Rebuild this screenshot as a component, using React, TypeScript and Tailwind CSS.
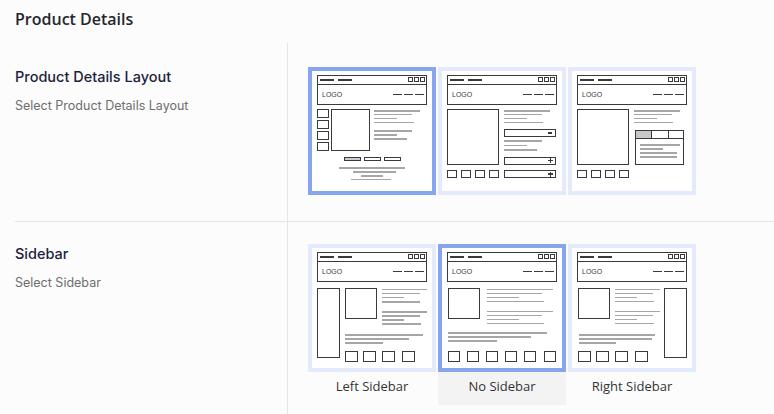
import React from "react";

const DARK = "#3a3a3a";
const GRAY = "#a6a6a6";

type Ln = [number, number, number];

function Lines({ items }: { items: Ln[] }) {
  return (
    <>
      {items.map(([x1, x2, y], i) => (
        <line key={i} x1={x1} x2={x2} y1={y} y2={y} stroke={GRAY} strokeWidth={1.3} />
      ))}
    </>
  );
}

function Box({ x, y, w, h, fill = "none" }: { x: number; y: number; w: number; h: number; fill?: string }) {
  return <rect x={x} y={y} width={w} height={h} fill={fill} stroke={DARK} strokeWidth={1} />;
}

function Header() {
  return (
    <g>
      <Box x={5.5} y={4.5} w={108.5} h={29} />
      <line x1={5.5} x2={114} y1={13.5} y2={13.5} stroke={DARK} strokeWidth={1} />
      <line x1={8} x2={22} y1={9} y2={9} stroke={DARK} strokeWidth={1.2} />
      <line x1={26} x2={40} y1={9} y2={9} stroke={DARK} strokeWidth={1.2} />
      <Box x={96.5} y={6.5} w={4} h={4} />
      <Box x={102.5} y={6.5} w={4} h={4} />
      <Box x={108.5} y={6.5} w={4} h={4} />
      <text x={10} y={26} fontSize={7} fill="#3a3a3a" fontFamily="'Liberation Sans', sans-serif">
        LOGO
      </text>
      <line x1={81} x2={90} y1={23.5} y2={23.5} stroke={DARK} strokeWidth={1.3} />
      <line x1={92} x2={101} y1={23.5} y2={23.5} stroke={DARK} strokeWidth={1.3} />
      <line x1={103} x2={112} y1={23.5} y2={23.5} stroke={DARK} strokeWidth={1.3} />
    </g>
  );
}

function Plus({ x, y }: { x: number; y: number }) {
  return (
    <g stroke={DARK} strokeWidth={1.2}>
      <line x1={x - 2.5} x2={x + 2.5} y1={y} y2={y} />
      <line x1={x} x2={x} y1={y - 2.5} y2={y + 2.5} />
    </g>
  );
}

function LayoutOne() {
  return (
    <>
      <Header />
      {[38.5, 49.5, 60.5, 71.5].map((y) => (
        <Box key={y} x={5.5} y={y} w={11} h={8} />
      ))}
      <Box x={19.5} y={38.5} w={38} h={41} />
      <Lines
        items={[
          [62, 108, 40],
          [62, 100, 43.5],
          [62, 85, 47.5],
          [62, 101.5, 51.5],
          [62, 100, 60],
          [62, 85, 64],
          [62, 95, 68],
        ]}
      />
      <Box x={32.5} y={86} w={16} h={3.5} fill="#c9cbd8" />
      <Box x={52.5} y={86} w={16} h={3.5} />
      <Box x={72.5} y={86} w={16} h={3.5} />
      <Lines
        items={[
          [27, 93, 97],
          [41, 84, 101],
          [49, 71, 105],
          [39, 79, 108.5],
        ]}
      />
    </>
  );
}

function ImageAndThumbs() {
  return (
    <>
      <Box x={5.5} y={38.5} w={51} h={55} />
      {[5.5, 19.5, 33.5, 47.5].map((x) => (
        <Box key={x} x={x} y={99.5} w={9} h={7} />
      ))}
      <Lines
        items={[
          [62, 108, 40],
          [62, 100, 43.5],
          [62, 85, 47.5],
          [62, 101, 51.5],
        ]}
      />
    </>
  );
}

function LayoutTwo() {
  return (
    <>
      <Header />
      <ImageAndThumbs />
      <Box x={62.5} y={58.5} w={50.5} h={7} />
      <line x1={106} x2={110} y1={62} y2={62} stroke={DARK} strokeWidth={1.3} />
      <Lines
        items={[
          [62, 100, 70],
          [62, 85, 74.5],
          [62, 95, 79],
        ]}
      />
      <Box x={62.5} y={86} w={50.5} h={7} />
      <Plus x={108.5} y={89.5} />
      <Box x={62.5} y={99.5} w={50.5} h={7} />
      <Plus x={108.5} y={103} />
    </>
  );
}

function LayoutThree() {
  return (
    <>
      <Header />
      <ImageAndThumbs />
      <rect x={63.5} y={59.5} width={16} height={8} fill="#c8c8c8" />
      <Box x={63.5} y={59.5} w={48} h={34} />
      <line x1={63.5} x2={111.5} y1={67.5} y2={67.5} stroke={DARK} strokeWidth={1} />
      <line x1={79.5} x2={79.5} y1={59.5} y2={67.5} stroke={DARK} strokeWidth={1} />
      <line x1={96} x2={96} y1={59.5} y2={67.5} stroke={DARK} strokeWidth={1} />
      <Lines
        items={[
          [68, 108, 74],
          [68, 91, 78],
          [68, 105, 82],
          [68, 105, 86],
        ]}
      />
    </>
  );
}

function LeftSidebar() {
  return (
    <>
      <Header />
      <Box x={5.5} y={40.5} w={22} h={69} />
      <Box x={33.5} y={40.5} w={31} h={30} />
      <Lines
        items={[
          [70, 115, 41.5],
          [70, 108, 45.5],
          [70, 92, 49.5],
          [70, 108, 54],
          [70, 115, 64],
          [70, 108, 68],
          [70, 92, 72],
          [70, 109, 76],
          [33, 111, 87],
          [33, 97, 91],
          [33, 71, 95],
        ]}
      />
      {[33.5, 51.5, 70.5, 90.5].map((x) => (
        <Box key={x} x={x} y={103.5} w={11.5} h={9.5} />
      ))}
    </>
  );
}

function NoSidebar() {
  return (
    <>
      <Header />
      <Box x={6.5} y={40.5} w={31} h={30} />
      <Lines
        items={[
          [45, 111, 41.5],
          [45, 100, 45.5],
          [45, 77, 49.5],
          [45, 102, 53.5],
          [45, 111, 63.5],
          [45, 100, 67.5],
          [45, 77, 71.5],
          [45, 102, 75.5],
          [6, 105, 85],
          [6, 89, 89],
          [6, 55, 93],
        ]}
      />
      {[6.5, 25.5, 44.5, 63.5, 82.5, 102.5].map((x) => (
        <Box key={x} x={x} y={103.5} w={11} h={9.5} />
      ))}
    </>
  );
}

function RightSidebar() {
  return (
    <>
      <Header />
      <Box x={6.5} y={40.5} w={31} h={30} />
      <Lines
        items={[
          [43, 88, 41.5],
          [43, 81, 45.5],
          [43, 65, 49.5],
          [43, 82, 53.5],
          [43, 88, 63.5],
          [43, 81, 67.5],
          [43, 65, 71.5],
          [43, 82, 75.5],
          [6.5, 83, 87],
          [6.5, 80, 91],
          [6.5, 44, 95],
        ]}
      />
      <Box x={92.5} y={40.5} w={22} h={69} />
      {[6.5, 24.5, 43.5, 63.5].map((x) => (
        <Box key={x} x={x} y={103.5} w={11.5} h={9.5} />
      ))}
    </>
  );
}

function Card({ selected, children }: { selected?: boolean; children: React.ReactNode }) {
  return (
    <div
      className={
        "w-[128px] h-[128px] border-4 bg-white " +
        (selected ? "border-[#87a5ee]" : "border-[#e2eafc]")
      }
    >
      <svg width={120} height={120} viewBox="0 0 120 120" shapeRendering="crispEdges">
        {children}
      </svg>
    </div>
  );
}

function Option({ label, selected, children }: { label: string; selected?: boolean; children: React.ReactNode }) {
  return (
    <div className={"flex flex-col w-[128px] " + (selected ? "bg-[#f3f3f3]" : "")}>
      <Card selected={selected}>{children}</Card>
      <div className="h-[33px] pb-[4px] flex items-center justify-center text-[13px] text-[#333] font-['Open_Sans',sans-serif]">
        {label}
      </div>
    </div>
  );
}

function Label({ title, sub }: { title: string; sub: string }) {
  return (
    <div className="w-[272px] shrink-0 font-['Inter',sans-serif]">
      <div className="text-[14.5px] leading-5 font-medium text-[#1c1f3d]">{title}</div>
      <div className="mt-[9px] text-[12.5px] leading-5 text-[#6e6e6e]">{sub}</div>
    </div>
  );
}

export default function App() {
  return (
    <div className="w-[774px] h-[414px] overflow-hidden bg-[#fcfcfc]">
      <div className="h-[43px] pl-[15px] flex items-center">
        <h1 className="text-[16px] font-semibold text-[#24262b] font-['Open_Sans',sans-serif] -mt-[6px]">
          Product Details
        </h1>
      </div>

      <div className="ml-[15px]">
        {/* layout */}
        <div className="flex border-b border-[#e6e6e6]">
          <div className="pt-6">
            <Label title="Product Details Layout" sub="Select Product Details Layout" />
          </div>
          <div className="border-l border-[#e6e6e6] pl-[20px] pt-6 pb-[26px] flex gap-[2px]">
            <Card selected>
              <LayoutOne />
            </Card>
            <Card>
              <LayoutTwo />
            </Card>
            <Card>
              <LayoutThree />
            </Card>
          </div>
        </div>

        {/* sidebar */}
        <div className="flex h-[194px]">
          <div className="pt-[22px]">
            <Label title="Sidebar" sub="Select Sidebar" />
          </div>
          <div className="border-l border-[#e6e6e6] pl-[20px] pt-[22px] flex gap-[2px] items-start">
            <Option label="Left Sidebar">
              <LeftSidebar />
            </Option>
            <Option label="No Sidebar" selected>
              <NoSidebar />
            </Option>
            <Option label="Right Sidebar">
              <RightSidebar />
            </Option>
          </div>
        </div>
      </div>
    </div>
  );
}
